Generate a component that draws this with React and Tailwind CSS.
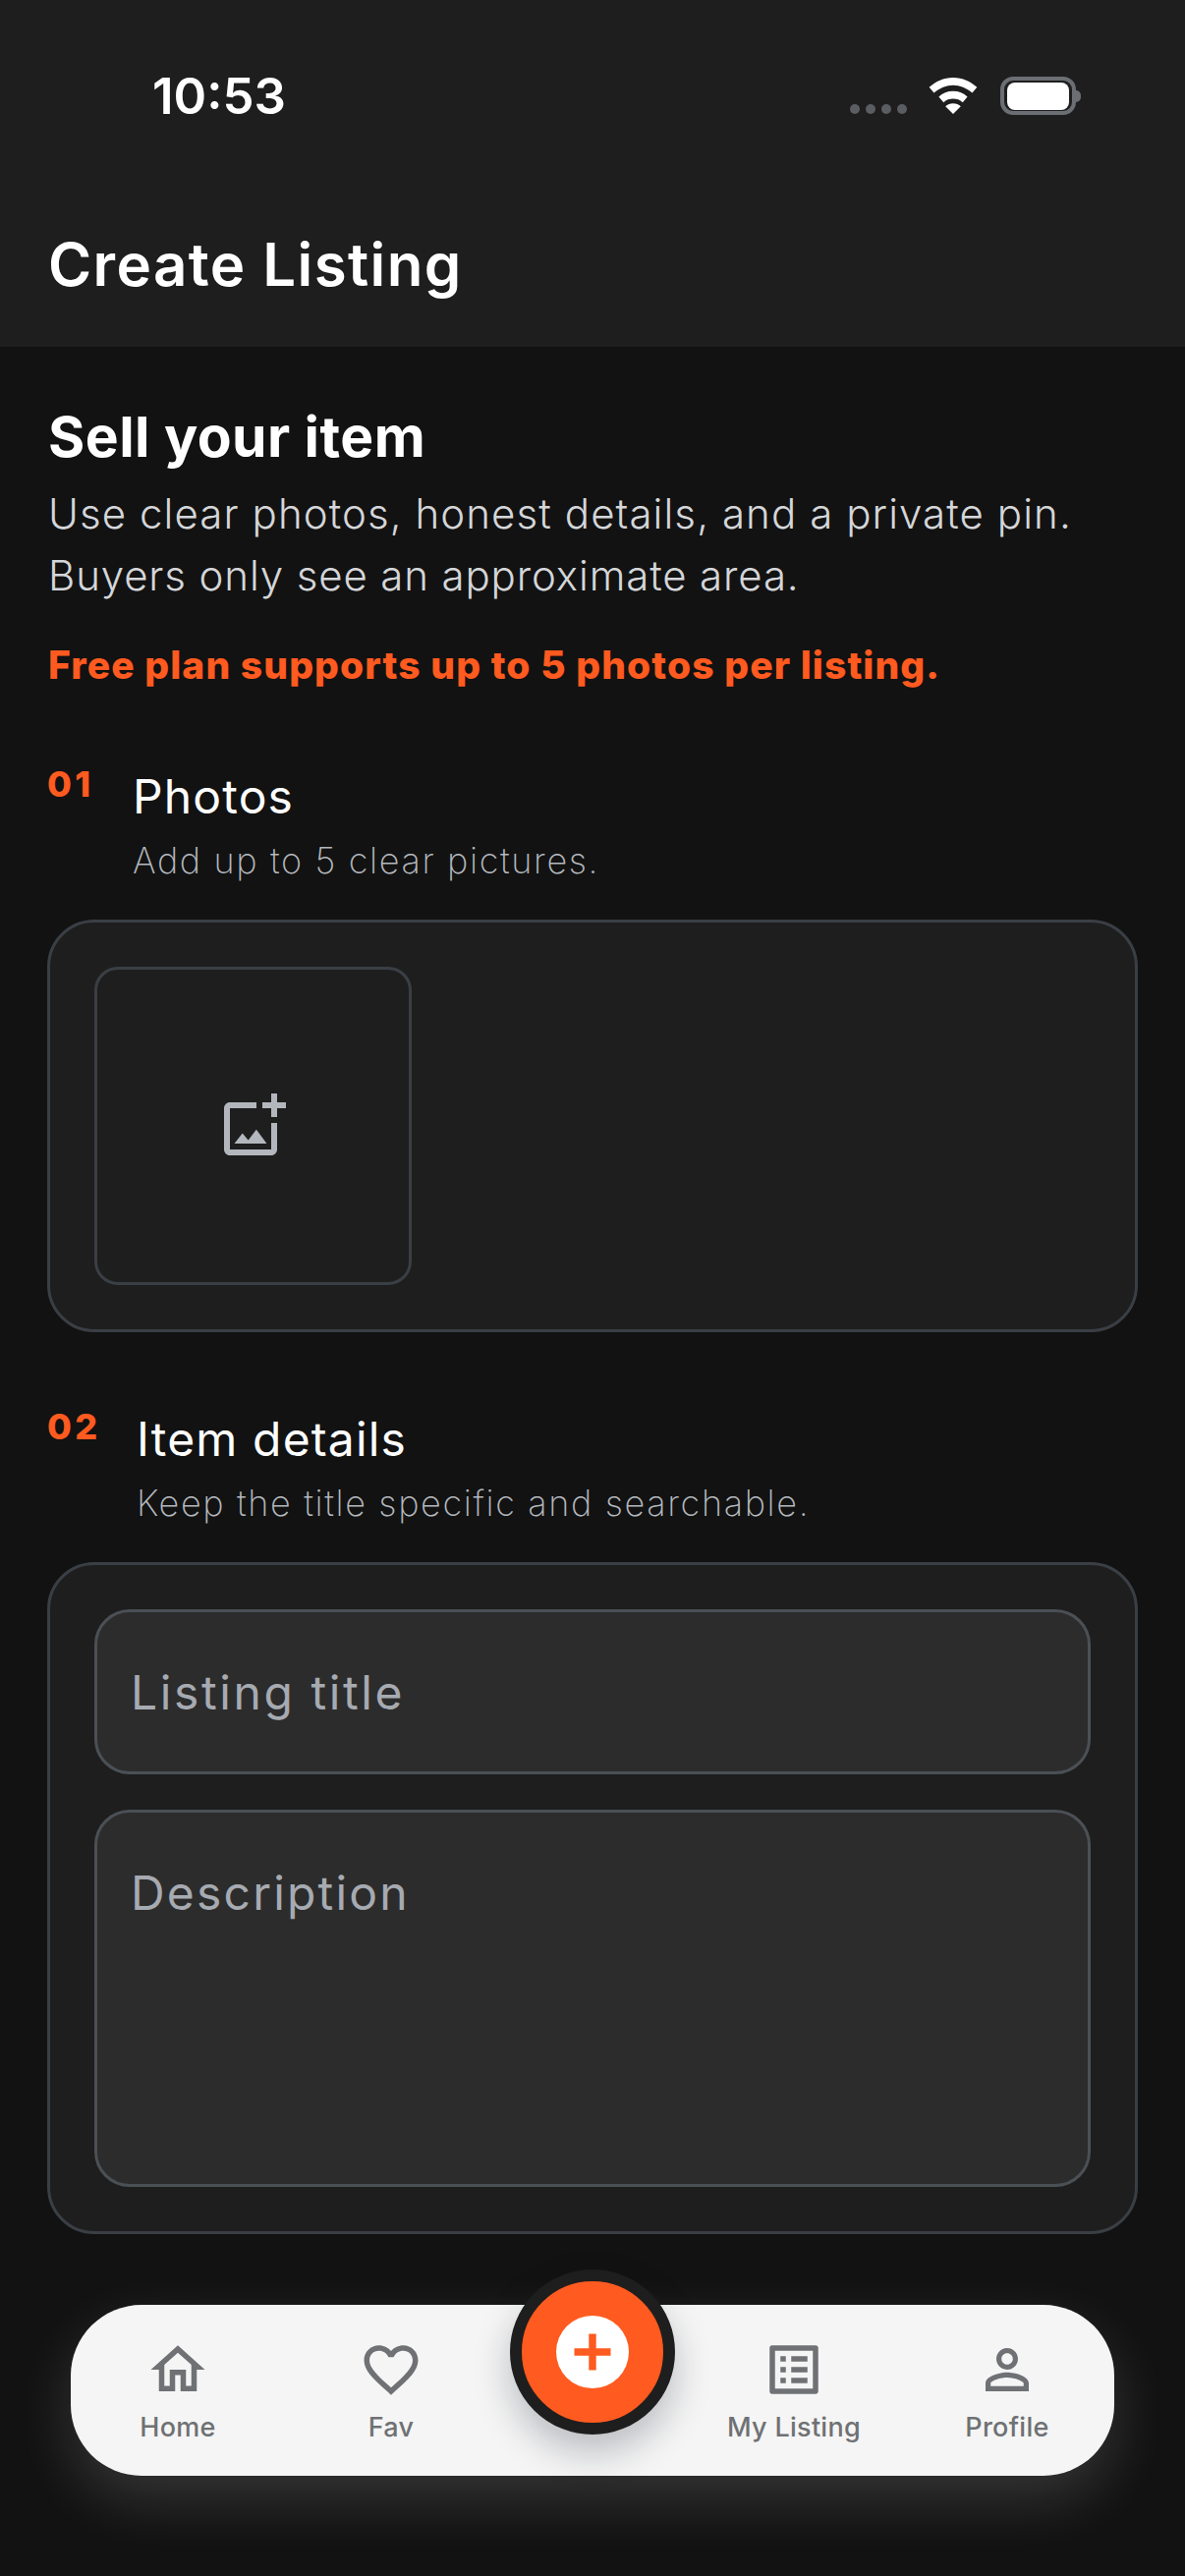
const homeD = "M12 5.69l5 4.5V18h-2v-6H9v6H7v-7.81l5-4.5M12 3L2 12h3v8h6v-6h2v6h6v-8h3L12 3z";
const heartD = "M16.5 3c-1.74 0-3.41.81-4.5 2.09C10.91 3.81 9.24 3 7.5 3 4.42 3 2 5.42 2 8.5c0 3.78 3.4 6.86 8.55 11.54L12 21.35l1.45-1.32C18.6 15.36 22 12.28 22 8.5 22 5.42 19.58 3 16.5 3zm-4.4 15.55l-.1.1-.1-.1C7.14 14.24 4 11.39 4 8.5 4 6.5 5.5 5 7.5 5c1.54 0 3.04.99 3.57 2.36h1.87C13.46 5.99 14.96 5 16.5 5c2 0 3.5 1.5 3.5 3.5 0 2.89-3.14 5.74-7.9 10.05z";
const listD = "M19 5v14H5V5h14m1.1-2H3.9c-.5 0-.9.4-.9.9v16.2c0 .4.4.9.9.9h16.2c.4 0 .9-.5.9-.9V3.9c0-.5-.5-.9-.9-.9zM11 7h6v2h-6V7zm0 4h6v2h-6v-2zm0 4h6v2h-6zM7 7h2v2H7zm0 4h2v2H7zm0 4h2v2H7z";
const personD = "M12 5.9c1.16 0 2.1.94 2.1 2.1s-.94 2.1-2.1 2.1S9.9 9.16 9.9 8s.94-2.1 2.1-2.1m0 9c2.97 0 6.1 1.46 6.1 2.1v1.1H5.9V17c0-.64 3.13-2.1 6.1-2.1M12 4C9.79 4 8 5.79 8 8s1.79 4 4 4 4-1.79 4-4-1.79-4-4-4zm0 9c-2.67 0-8 1.34-8 4v3h16v-3c0-2.66-5.33-4-8-4z";
const addPhotoD = "M18 20H4V6h9V4H4c-1.1 0-2 .9-2 2v14c0 1.1.9 2 2 2h14c1.1 0 2-.9 2-2v-9h-2v9zm-7.79-3.17l-1.96-2.36L5.5 18h11l-3.54-4.71zM20 4V1h-2v3h-3c.01.01 0 2 0 2h3v2.99c.01.01 2 0 2 0V6h3V4h-3z";

function Icon({ d, className }) {
  return (
    <svg viewBox="0 0 24 24" fill="currentColor" className={className}>
      <path d={d} />
    </svg>
  );
}

function StatusBar() {
  return (
    <div className="flex h-[144px] items-start justify-between pl-[155px] pr-[106px] pt-[68px]">
      <span className="text-[51px] leading-[60px] font-semibold text-white">10:53</span>
      <div className="flex items-start pt-[10px]">
        <div className="mr-[22px] mt-[28px] flex gap-[6px]">
          <span className="h-[10px] w-[10px] rounded-full bg-[#5a5e63]" />
          <span className="h-[10px] w-[10px] rounded-full bg-[#5a5e63]" />
          <span className="h-[10px] w-[10px] rounded-full bg-[#5a5e63]" />
          <span className="h-[10px] w-[10px] rounded-full bg-[#5a5e63]" />
        </div>
        <svg viewBox="0 0 50 38" className="mr-[23px] mt-[1px] h-[37px] w-[50px]" fill="#fff">
          <path d="M25 0C15 0 7 4 0 10l5 6c6-5 13-8 20-8s14 3 20 8l5-6C43 4 35 0 25 0z" />
          <path d="M25 14c-6 0-11 2-15 6l5 6c3-3 6-4 10-4s7 1 10 4l5-6c-4-4-9-6-15-6z" />
          <path d="M25 27c-3 0-6 1-8 3l8 8 8-8c-2-2-5-3-8-3z" />
        </svg>
        <div className="flex items-center">
          <div className="flex h-[39px] w-[77px] items-center justify-center rounded-[13px] border-[4px] border-[#6b6e72]">
            <div className="h-[28px] w-[63px] rounded-[8px] bg-white" />
          </div>
          <div className="h-[12px] w-[5px] rounded-r-full bg-[#6b6e72]" />
        </div>
      </div>
    </div>
  );
}

function SectionHead({ num, title, sub, gap }) {
  return (
    <div className="flex items-start">
      <span className={`${gap} -mt-[6px] text-[36px] leading-[44px] font-extrabold tracking-[3.4px] text-[#ff5a1f]`}>{num}</span>
      <div>
        <div className="text-[48px] leading-[58px] font-normal tracking-[1.15px] text-white">{title}</div>
        <div className="mt-[11px] text-[36px] leading-[50px] font-extralight tracking-[1.63px] text-[#b4b8be]">{sub}</div>
      </div>
    </div>
  );
}

function NavItem({ d, label, className }) {
  return (
    <div className={`flex w-[180px] flex-col items-center ${className}`}>
      <Icon d={d} className="h-[66px] w-[66px] text-[#6f7174]" />
      <span className="mt-[8px] text-[27px] leading-[36px] font-medium tracking-[0.3px] text-[#6f7174]">{label}</span>
    </div>
  );
}

export default function App() {
  return (
    <div className="relative h-[2622px] w-[1206px] overflow-hidden bg-[#121212] font-['Inter',sans-serif]">
      <header className="h-[353px] bg-[#1e1e1e]">
        <StatusBar />
        <h1 className="pl-[49px] pt-[90px] text-[60px] leading-[70px] font-semibold tracking-[1.4px] text-white">Create Listing</h1>
      </header>

      <main className="px-[48px] pt-[59px]">
        <h2 className="pl-[1px] text-[57px] leading-[66px] font-bold tracking-[0.45px] text-white">Sell your item</h2>
        <p className="mt-[13px] pl-[1px] text-[42px] leading-[63px] font-light tracking-[1.08px] text-[#d4d6d9]">
          Use clear photos, honest details, and a private pin.<br />
          <span className="tracking-[0.87px]">Buyers only see an approximate area.</span>
        </p>
        <p className="mt-[35px] pl-[1px] text-[39px] leading-[50px] font-extrabold tracking-[1.08px] text-[#ff5a1f]">Free plan supports up to 5 photos per listing.</p>

        <section className="mt-[80px]">
          <SectionHead num="01" title="Photos" sub="Add up to 5 clear pictures." gap="w-[87px]" />
          <div className="mt-[35px] h-[420px] rounded-[48px] border-[3px] border-[#3a3f45] bg-[#1e1e1e] p-[45px]">
            <div className="flex h-[324px] w-[323px] items-center justify-center rounded-[24px] border-[3px] border-[#3a3f45]">
              <Icon d={addPhotoD} className="h-[72px] w-[72px] text-[#b3b7bd]" />
            </div>
          </div>
        </section>

        <section className="mt-[80px]">
          <SectionHead num="02" title="Item details" sub="Keep the title specific and searchable." gap="w-[91px]" />
          <div className="mt-[35px] flex h-[684px] flex-col gap-[36px] rounded-[48px] border-[3px] border-[#3a3f45] bg-[#1e1e1e] p-[45px]">
            <div className="flex h-[168px] items-center rounded-[36px] border-[3px] border-[#4b5055] bg-[#2c2c2c] px-[34px] pt-[2px] text-[48px] font-normal tracking-[2.6px] text-[#a6aab1]">Listing title</div>
            <div className="h-[384px] rounded-[36px] border-[3px] border-[#4b5055] bg-[#2c2c2c] px-[34px] pt-[53px] text-[48px] leading-[58px] font-normal tracking-[2.2px] text-[#a6aab1]">Description</div>
          </div>
        </section>
      </main>

      <div className="absolute bottom-[102px] left-[72px] flex h-[174px] w-[1062px] items-start rounded-[72px] bg-[#f5f5f5] pt-[33px] shadow-[0_24px_60px_rgba(255,255,255,0.15)]">
        <NavItem d={homeD} label="Home" className="ml-[19px]" />
        <NavItem d={heartD} label="Fav" className="ml-[37px]" />
        <NavItem d={listD} label="My Listing" className="ml-[230px]" />
        <NavItem d={personD} label="Profile" className="ml-[37px]" />
        <div className="absolute left-[447px] top-[-36px] flex h-[168px] w-[168px] items-center justify-center rounded-full border-[12px] border-[#1e1e1e] bg-[#ff5a1f] shadow-[0_18px_36px_rgba(17,24,39,0.25)]">
          <svg viewBox="2 2 20 20" className="h-[74px] w-[74px]">
            <circle cx="12" cy="12" r="10" fill="#fff" />
            <path d="M17 13h-4v4h-2v-4H7v-2h4V7h2v4h4v2z" fill="#ff5a1f" />
          </svg>
        </div>
      </div>
    </div>
  );
}
